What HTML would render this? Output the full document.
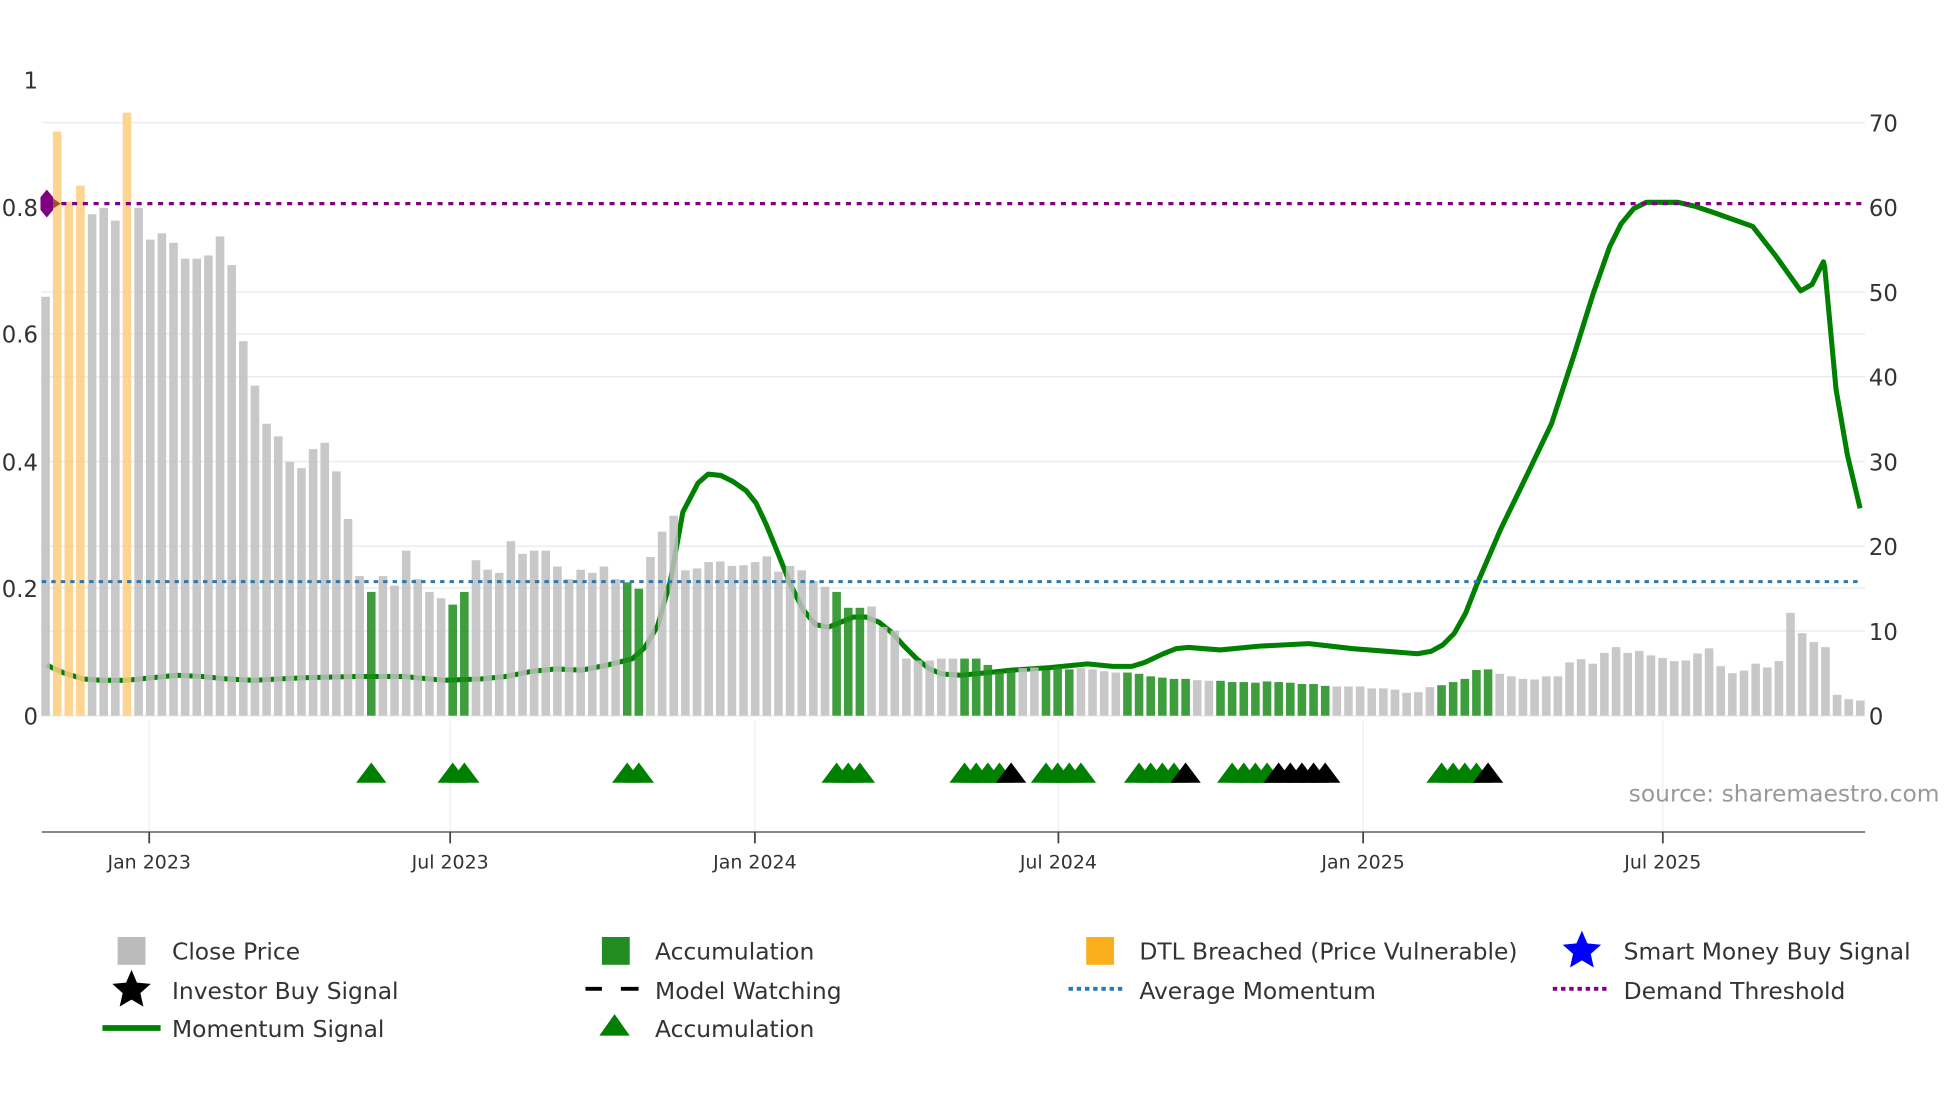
<!DOCTYPE html>
<html><head><meta charset="utf-8">
<style>
html,body{margin:0;padding:0;background:#fff;}
svg{display:block;}
text{font-family:"DejaVu Sans","Liberation Sans",sans-serif;}
</style></head>
<body>
<svg width="1960" height="1102" viewBox="0 0 1550 871.5" xmlns="http://www.w3.org/2000/svg">
<g stroke="#e9eef4" stroke-width="1.2">
<line x1="33" y1="97" x2="1475" y2="97"/>
<line x1="33" y1="231" x2="1475" y2="231"/>
<line x1="33" y1="264" x2="1475" y2="264"/>
<line x1="33" y1="298" x2="1475" y2="298"/>
<line x1="33" y1="365" x2="1475" y2="365"/>
<line x1="33" y1="432" x2="1475" y2="432"/>
<line x1="33" y1="465" x2="1475" y2="465"/>
<line x1="33" y1="499" x2="1475" y2="499"/>
<line x1="33" y1="566" x2="1475" y2="566"/>
</g>
<g stroke="#eceef2" stroke-width="1">
<line x1="118" y1="570" x2="118" y2="658"/>
<line x1="356" y1="570" x2="356" y2="658"/>
<line x1="597" y1="570" x2="597" y2="658"/>
<line x1="837" y1="570" x2="837" y2="658"/>
<line x1="1078" y1="570" x2="1078" y2="658"/>
<line x1="1315" y1="570" x2="1315" y2="658"/>
</g>
<polyline fill="none" stroke="#008000" stroke-width="4" stroke-linejoin="round" points="37,526 50,532 66,537 80,538 100,538 120,536 140,534 160,535 180,537 200,538 240,536 280,535 320,535 350,538 380,537 400,535 420,531 440,529 460,530 480,526 500,521 510,512 520,495 530,460 540,405 552,382 560,375 570,376 580,381 590,388 598,398 606,415 615,437 625,462 635,482 645,494 655,496 665,492 675,488 685,488 695,492 705,500 715,511 725,521 735,529 745,533 760,534 780,532 800,530 830,528 860,525 880,527 895,527 905,524 920,517 930,513 940,512 965,514 996,511 1035,509 1070,513 1121,517 1132,515 1141,510 1150,501 1159,485 1168,462 1187,418 1205,381 1227,335 1245,280 1260,232 1273,195 1282,177 1292,165 1302,160 1311,160 1327,160 1340,163 1355,168 1369,173 1386,179 1404,202 1424,230 1433,225 1442,207 1443,211 1452,308 1461,360 1471,402"/>
<g transform="translate(32.6,566) scale(1,-502)" opacity="0.86">
<g fill="#c0c0c0">
<rect x="0" width="6.8" height=".66"/>
<rect x="36.8" width="6.8" height=".79"/>
<rect x="46" width="6.8" height=".80"/>
<rect x="55.2" width="6.8" height=".78"/>
<rect x="73.6" width="6.8" height=".80"/>
<rect x="82.8" width="6.8" height=".75"/>
<rect x="92" width="6.8" height=".76"/>
<rect x="101.2" width="6.8" height=".745"/>
<rect x="110.4" width="6.8" height=".72"/>
<rect x="119.6" width="6.8" height=".72"/>
<rect x="128.8" width="6.8" height=".725"/>
<rect x="138" width="6.8" height=".755"/>
<rect x="147.2" width="6.8" height=".71"/>
<rect x="156.4" width="6.8" height=".59"/>
<rect x="165.6" width="6.8" height=".52"/>
<rect x="174.8" width="6.8" height=".46"/>
<rect x="184" width="6.8" height=".44"/>
<rect x="193.2" width="6.8" height=".40"/>
<rect x="202.4" width="6.8" height=".39"/>
<rect x="211.6" width="6.8" height=".42"/>
<rect x="220.8" width="6.8" height=".43"/>
<rect x="230" width="6.8" height=".385"/>
<rect x="239.2" width="6.8" height=".31"/>
<rect x="248.4" width="6.8" height=".22"/>
<rect x="266.8" width="6.8" height=".22"/>
<rect x="276" width="6.8" height=".205"/>
<rect x="285.2" width="6.8" height=".26"/>
<rect x="294.4" width="6.8" height=".215"/>
<rect x="303.6" width="6.8" height=".195"/>
<rect x="312.8" width="6.8" height=".185"/>
<rect x="340.4" width="6.8" height=".245"/>
<rect x="349.6" width="6.8" height=".23"/>
<rect x="358.8" width="6.8" height=".225"/>
<rect x="368" width="6.8" height=".275"/>
<rect x="377.2" width="6.8" height=".255"/>
<rect x="386.4" width="6.8" height=".26"/>
<rect x="395.6" width="6.8" height=".26"/>
<rect x="404.8" width="6.8" height=".235"/>
<rect x="414" width="6.8" height=".215"/>
<rect x="423.2" width="6.8" height=".23"/>
<rect x="432.4" width="6.8" height=".225"/>
<rect x="441.6" width="6.8" height=".235"/>
<rect x="450.8" width="6.8" height=".215"/>
<rect x="478.4" width="6.8" height=".25"/>
<rect x="487.6" width="6.8" height=".29"/>
<rect x="496.8" width="6.8" height=".315"/>
<rect x="506" width="6.8" height=".229"/>
<rect x="515.2" width="6.8" height=".232"/>
<rect x="524.4" width="6.8" height=".242"/>
<rect x="533.6" width="6.8" height=".243"/>
<rect x="542.8" width="6.8" height=".236"/>
<rect x="552" width="6.8" height=".237"/>
<rect x="561.2" width="6.8" height=".242"/>
<rect x="570.4" width="6.8" height=".251"/>
<rect x="579.6" width="6.8" height=".227"/>
<rect x="588.8" width="6.8" height=".236"/>
<rect x="598" width="6.8" height=".229"/>
<rect x="607.2" width="6.8" height=".212"/>
<rect x="616.4" width="6.8" height=".203"/>
<rect x="653.2" width="6.8" height=".172"/>
<rect x="662.4" width="6.8" height=".14"/>
<rect x="671.6" width="6.8" height=".134"/>
<rect x="680.8" width="6.8" height=".09"/>
<rect x="690" width="6.8" height=".087"/>
<rect x="699.2" width="6.8" height=".087"/>
<rect x="708.4" width="6.8" height=".09"/>
<rect x="717.6" width="6.8" height=".09"/>
<rect x="772.8" width="6.8" height=".075"/>
<rect x="782" width="6.8" height=".076"/>
<rect x="818.8" width="6.8" height=".075"/>
<rect x="828" width="6.8" height=".073"/>
<rect x="837.2" width="6.8" height=".07"/>
<rect x="846.4" width="6.8" height=".068"/>
<rect x="910.8" width="6.8" height=".056"/>
<rect x="920" width="6.8" height=".055"/>
<rect x="1021.2" width="6.8" height=".046"/>
<rect x="1030.4" width="6.8" height=".046"/>
<rect x="1039.6" width="6.8" height=".046"/>
<rect x="1048.8" width="6.8" height=".043"/>
<rect x="1058" width="6.8" height=".043"/>
<rect x="1067.2" width="6.8" height=".041"/>
<rect x="1076.4" width="6.8" height=".036"/>
<rect x="1085.6" width="6.8" height=".037"/>
<rect x="1094.8" width="6.8" height=".045"/>
<rect x="1150" width="6.8" height=".066"/>
<rect x="1159.2" width="6.8" height=".062"/>
<rect x="1168.4" width="6.8" height=".058"/>
<rect x="1177.6" width="6.8" height=".057"/>
<rect x="1186.8" width="6.8" height=".062"/>
<rect x="1196" width="6.8" height=".062"/>
<rect x="1205.2" width="6.8" height=".084"/>
<rect x="1214.4" width="6.8" height=".089"/>
<rect x="1223.6" width="6.8" height=".082"/>
<rect x="1232.8" width="6.8" height=".099"/>
<rect x="1242" width="6.8" height=".108"/>
<rect x="1251.2" width="6.8" height=".099"/>
<rect x="1260.4" width="6.8" height=".102"/>
<rect x="1269.6" width="6.8" height=".095"/>
<rect x="1278.8" width="6.8" height=".091"/>
<rect x="1288" width="6.8" height=".086"/>
<rect x="1297.2" width="6.8" height=".087"/>
<rect x="1306.4" width="6.8" height=".098"/>
<rect x="1315.6" width="6.8" height=".106"/>
<rect x="1324.8" width="6.8" height=".078"/>
<rect x="1334" width="6.8" height=".067"/>
<rect x="1343.2" width="6.8" height=".071"/>
<rect x="1352.4" width="6.8" height=".082"/>
<rect x="1361.6" width="6.8" height=".076"/>
<rect x="1370.8" width="6.8" height=".086"/>
<rect x="1380" width="6.8" height=".162"/>
<rect x="1389.2" width="6.8" height=".130"/>
<rect x="1398.4" width="6.8" height=".116"/>
<rect x="1407.6" width="6.8" height=".108"/>
<rect x="1416.8" width="6.8" height=".033"/>
<rect x="1426" width="6.8" height=".026"/>
<rect x="1435.2" width="6.8" height=".024"/>
</g>
<g fill="#fecd80">
<rect x="9.2" width="6.8" height=".92"/>
<rect x="18.4" width="6.8" height=".81"/>
<rect x="27.6" width="6.8" height=".835"/>
<rect x="64.4" width="6.8" height=".95"/>
</g>
<g fill="#1f8f1f">
<rect x="257.6" width="6.8" height=".195"/>
<rect x="322" width="6.8" height=".175"/>
<rect x="331.2" width="6.8" height=".195"/>
<rect x="460" width="6.8" height=".21"/>
<rect x="469.2" width="6.8" height=".20"/>
<rect x="625.6" width="6.8" height=".195"/>
<rect x="634.8" width="6.8" height=".17"/>
<rect x="644" width="6.8" height=".17"/>
<rect x="726.8" width="6.8" height=".09"/>
<rect x="736" width="6.8" height=".09"/>
<rect x="745.2" width="6.8" height=".08"/>
<rect x="754.4" width="6.8" height=".069"/>
<rect x="763.6" width="6.8" height=".072"/>
<rect x="791.2" width="6.8" height=".072"/>
<rect x="800.4" width="6.8" height=".077"/>
<rect x="809.6" width="6.8" height=".073"/>
<rect x="855.6" width="6.8" height=".068"/>
<rect x="864.8" width="6.8" height=".066"/>
<rect x="874" width="6.8" height=".062"/>
<rect x="883.2" width="6.8" height=".06"/>
<rect x="892.4" width="6.8" height=".058"/>
<rect x="901.6" width="6.8" height=".058"/>
<rect x="929.2" width="6.8" height=".055"/>
<rect x="938.4" width="6.8" height=".053"/>
<rect x="947.6" width="6.8" height=".053"/>
<rect x="956.8" width="6.8" height=".052"/>
<rect x="966" width="6.8" height=".054"/>
<rect x="975.2" width="6.8" height=".053"/>
<rect x="984.4" width="6.8" height=".052"/>
<rect x="993.6" width="6.8" height=".05"/>
<rect x="1002.8" width="6.8" height=".05"/>
<rect x="1012" width="6.8" height=".047"/>
<rect x="1104" width="6.8" height=".048"/>
<rect x="1113.2" width="6.8" height=".053"/>
<rect x="1122.4" width="6.8" height=".058"/>
<rect x="1131.6" width="6.8" height=".072"/>
<rect x="1140.8" width="6.8" height=".073"/>
</g>
</g>
<line x1="40" y1="161" x2="1472" y2="161" stroke="#800080" stroke-width="2.6" stroke-dasharray="4,4.5"/>
<line x1="33" y1="460" x2="1472" y2="460" stroke="#2a78ae" stroke-width="2.4" stroke-dasharray="3.5,4"/>
<polygon points="37,150 42,156 42,166 37,172 32,166 32,156" fill="#800080"/>
<polygon points="42,157 48,161 42,165" fill="#a0522d"/>
<g fill="#008000">
<path d="M281.6,619l12,-16l12,16z"/>
<path d="M346,619l12,-16l12,16z"/>
<path d="M355.2,619l12,-16l12,16z"/>
<path d="M484,619l12,-16l12,16z"/>
<path d="M493.2,619l12,-16l12,16z"/>
<path d="M649.6,619l12,-16l12,16z"/>
<path d="M658.8,619l12,-16l12,16z"/>
<path d="M668,619l12,-16l12,16z"/>
<path d="M750.8,619l12,-16l12,16z"/>
<path d="M760,619l12,-16l12,16z"/>
<path d="M769.2,619l12,-16l12,16z"/>
<path d="M778.4,619l12,-16l12,16z"/>
<path d="M815.2,619l12,-16l12,16z"/>
<path d="M824.4,619l12,-16l12,16z"/>
<path d="M833.6,619l12,-16l12,16z"/>
<path d="M842.8,619l12,-16l12,16z"/>
<path d="M888.8,619l12,-16l12,16z"/>
<path d="M898,619l12,-16l12,16z"/>
<path d="M907.2,619l12,-16l12,16z"/>
<path d="M916.4,619l12,-16l12,16z"/>
<path d="M962.4,619l12,-16l12,16z"/>
<path d="M971.6,619l12,-16l12,16z"/>
<path d="M980.8,619l12,-16l12,16z"/>
<path d="M990,619l12,-16l12,16z"/>
<path d="M1128,619l12,-16l12,16z"/>
<path d="M1137.2,619l12,-16l12,16z"/>
<path d="M1146.4,619l12,-16l12,16z"/>
<path d="M1155.6,619l12,-16l12,16z"/>
</g>
<g fill="#000">
<path d="M787.6,619l12,-16l12,16z"/>
<path d="M925.6,619l12,-16l12,16z"/>
<path d="M999.2,619l12,-16l12,16z"/>
<path d="M1008.4,619l12,-16l12,16z"/>
<path d="M1017.6,619l12,-16l12,16z"/>
<path d="M1026.8,619l12,-16l12,16z"/>
<path d="M1036,619l12,-16l12,16z"/>
<path d="M1164.8,619l12,-16l12,16z"/>
</g>
<line x1="33" y1="658" x2="1475" y2="658" stroke="#777" stroke-width="1.4"/>
<g stroke="#444" stroke-width="1.4">
<line x1="118" y1="658" x2="118" y2="667"/>
<line x1="356" y1="658" x2="356" y2="667"/>
<line x1="597" y1="658" x2="597" y2="667"/>
<line x1="837" y1="658" x2="837" y2="667"/>
<line x1="1078" y1="658" x2="1078" y2="667"/>
<line x1="1315" y1="658" x2="1315" y2="667"/>
</g>
<g font-size="15" fill="#333" text-anchor="middle">
<text x="118" y="687">Jan 2023</text>
<text x="356" y="687">Jul 2023</text>
<text x="597" y="687">Jan 2024</text>
<text x="837" y="687">Jul 2024</text>
<text x="1078" y="687">Jan 2025</text>
<text x="1315" y="687">Jul 2025</text>
</g>
<g font-size="18" fill="#333" text-anchor="end">
<text x="30" y="70">1</text>
<text x="30" y="171">0.8</text>
<text x="30" y="271">0.6</text>
<text x="30" y="372">0.4</text>
<text x="30" y="472">0.2</text>
<text x="30" y="573">0</text>
</g>
<g font-size="18" fill="#333">
<text x="1478" y="104">70</text>
<text x="1478" y="171">60</text>
<text x="1478" y="238">50</text>
<text x="1478" y="305">40</text>
<text x="1478" y="372">30</text>
<text x="1478" y="439">20</text>
<text x="1478" y="506">10</text>
<text x="1478" y="573">0</text>
</g>
<text x="1288" y="634" font-size="18.5" fill="#999">source: sharemaestro.com</text>
<rect x="93" y="741" width="22" height="22" fill="#bbb"/>
<rect x="476" y="741" width="22" height="22" fill="#228b22"/>
<rect x="859" y="741" width="22" height="22" fill="#fbae1c"/>
<polygon fill="#0000ff" points="1251,736 1255.3,746.1 1266.2,747.1 1258,754.4 1260.4,765.1 1251,759.5 1241.6,765.1 1244,754.4 1235.8,747.1 1246.7,746.1"/>
<polygon fill="#000" points="104,767 108.3,777.1 119.2,778.1 111,785.4 113.4,796.1 104,790.5 94.6,796.1 97,785.4 88.8,778.1 99.7,777.1"/>
<g stroke="#000" stroke-width="3"><line x1="463" y1="782" x2="476" y2="782"/><line x1="491" y1="782" x2="505" y2="782"/></g>
<line x1="845" y1="782" x2="888" y2="782" stroke="#2a78ae" stroke-width="3" stroke-dasharray="3.5,3"/>
<line x1="1228" y1="782" x2="1271" y2="782" stroke="#800080" stroke-width="3" stroke-dasharray="3.5,3"/>
<line x1="81" y1="813" x2="127" y2="813" stroke="#008000" stroke-width="4.5"/>
<path d="M474,819l12,-17l12,17z" fill="#008000"/>
<g font-size="18.5" fill="#333">
<text x="136" y="759">Close Price</text>
<text x="518" y="759">Accumulation</text>
<text x="901" y="759">DTL Breached (Price Vulnerable)</text>
<text x="1284" y="759">Smart Money Buy Signal</text>
<text x="136" y="790">Investor Buy Signal</text>
<text x="518" y="790">Model Watching</text>
<text x="901" y="790">Average Momentum</text>
<text x="1284" y="790">Demand Threshold</text>
<text x="136" y="820">Momentum Signal</text>
<text x="518" y="820">Accumulation</text>
</g>
</svg>
</body></html>
